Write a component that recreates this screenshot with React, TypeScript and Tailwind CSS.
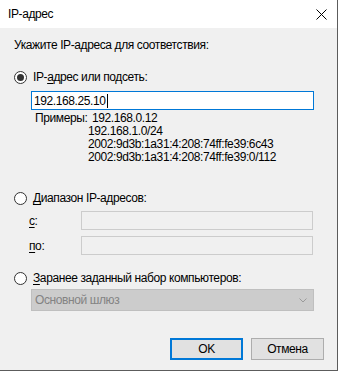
import { memo } from "react"

const font = { fontFamily: '"Liberation Sans", Arial, sans-serif' }

function Radio({ checked = false }: { checked?: boolean }) {
  return (
    <span className="flex h-[13px] w-[13px] shrink-0 items-center justify-center rounded-full border border-[#333333] bg-white">
      {checked && <span className="h-[7px] w-[7px] rounded-full bg-[#333333]" />}
    </span>
  )
}

const Examples = memo(function Examples() {
  const rest = ["192.168.1.0/24", "2002:9d3b:1a31:4:208:74ff:fe39:6c43", "2002:9d3b:1a31:4:208:74ff:fe39:0/112"]
  return (
    <div className="mt-[2px] text-[12px] leading-[13px] text-black">
      <div className="flex">
        <span className="ml-[35px] w-[57px]">Примеры:</span>
        <span>192.168.0.12</span>
      </div>
      {rest.map((line) => (
        <div key={line} className="ml-[88px]">
          {line}
        </div>
      ))}
    </div>
  )
})

export default function App() {
  return (
    <div className="h-[372px] w-[340px] bg-white tracking-[-0.4px]" style={font}>
      <div className="flex h-[371px] w-[338px] flex-col border-b border-r border-[#5c5c5c]">
        <div className="flex h-[28px] shrink-0 items-center justify-between bg-white pl-[8px] pr-[9px]">
          <span className="text-[12px] leading-[14px] text-black">IP-адрес</span>
          <svg width="11" height="11" viewBox="0 0 11 11" className="mr-[1px]">
            <path d="M0.5 0.5 L10.5 10.5 M10.5 0.5 L0.5 10.5" stroke="#000" strokeWidth="1" fill="none" />
          </svg>
        </div>

        <div className="flex flex-1 flex-col bg-[#f0f0f0] text-[12px] leading-[14px] text-black">
          <div className="ml-[14px] mt-[10px]">Укажите IP-адреса для соответствия:</div>

          <div className="ml-[14px] mt-[18px] flex h-[14px] items-center gap-[6px]">
            <Radio checked />
            <span>
              IP-<u className="underline-offset-2">а</u>дрес или подсеть:
            </span>
          </div>

          <div className="ml-[31px] mt-[7px] flex h-[19px] w-[283px] items-center border border-[#0078d7] bg-white pl-[2px]">
            <span>192.168.25.10</span>
            <span className="ml-[1px] h-[14px] w-px bg-black" />
          </div>

          <Examples />

          <div className="ml-[14px] mt-[27px] flex h-[14px] items-center gap-[6px]">
            <Radio />
            <span>
              <u className="underline-offset-2">Д</u>иапазон IP-адресов:
            </span>
          </div>

          <div className="mt-[6px] flex items-center">
            <span className="ml-[29px] w-[52px]">
              <u className="underline-offset-2">с</u>:
            </span>
            <div className="h-[19px] w-[232px] border border-[#cccccc] bg-[#f0f0f0]" />
          </div>

          <div className="mt-[6px] flex items-center">
            <span className="ml-[29px] w-[52px]">
              <u className="underline-offset-2">п</u>о:
            </span>
            <div className="h-[19px] w-[232px] border border-[#cccccc] bg-[#f0f0f0]" />
          </div>

          <div className="ml-[14px] mt-[16px] flex h-[14px] items-center gap-[6px]">
            <Radio />
            <span>
              <u className="underline-offset-2">З</u>аранее заданный набор компьютеров:
            </span>
          </div>

          <div className="ml-[31px] mt-[4px] flex h-[22px] w-[283px] items-center justify-between border border-[#bfbfbf] bg-[#cccccc] pl-[3px] pr-[6px]">
            <span className="text-[#838383]">Основной шлюз</span>
            <svg width="8" height="5" viewBox="0 0 8 5">
              <path d="M0.5 0.5 L4 4 L7.5 0.5" stroke="#9a9a9a" strokeWidth="1" fill="none" />
            </svg>
          </div>

          <div className="mt-[27px] flex justify-end gap-[8px] pr-[13px]">
            <button className="h-[22px] w-[73px] border-2 border-[#0078d7] bg-[#e1e1e1] text-[12px] text-black">OK</button>
            <button className="h-[22px] w-[73px] border border-[#adadad] bg-[#e1e1e1] text-[12px] text-black">Отмена</button>
          </div>
        </div>
      </div>
    </div>
  )
}
